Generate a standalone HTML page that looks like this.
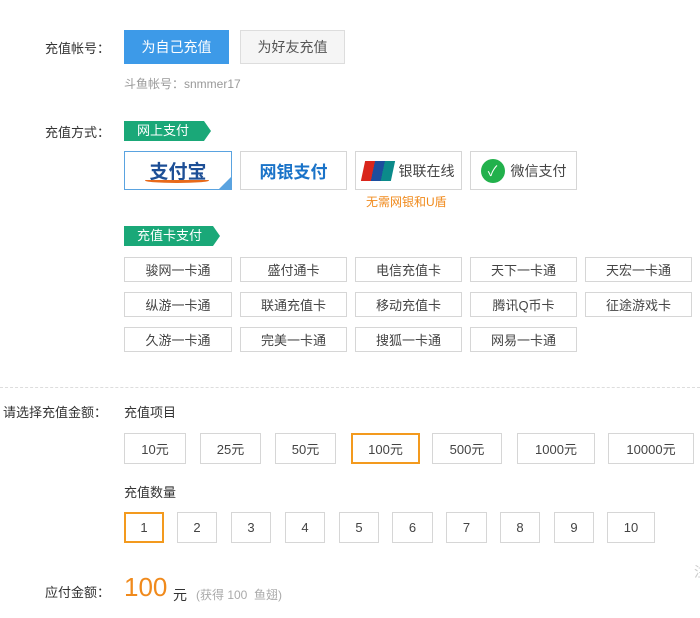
<!DOCTYPE html>
<html><head><meta charset="utf-8"><style>
*{margin:0;padding:0;box-sizing:border-box}
body{width:700px;height:618px;background:#fff;font-family:"Liberation Sans","Noto Sans CJK SC",sans-serif;font-size:13px;color:#333;position:relative;overflow:hidden}
.a{position:absolute;white-space:nowrap}
.b{position:absolute;border:1px solid #d6d6d6;background:#fff;display:flex;align-items:center;justify-content:center;font-size:13px;color:#444}
.o{border:2px solid #f39a1e}
.tag{position:absolute;height:20px;background:#1aa878;color:#fff;font-size:13px;line-height:20px;padding-left:13px;clip-path:polygon(0 0,calc(100% - 7px) 0,100% 50%,calc(100% - 7px) 100%,0 100%)}
</style></head><body>
<div class="a" style="left:45px;top:38px">充值帐号：</div>
<div class="b" style="left:124px;top:30px;width:105px;height:34px;background:#3d9ae8;border-color:#3d9ae8;color:#fff;font-size:14px">为自己充值</div>
<div class="b" style="left:240px;top:30px;width:105px;height:34px;background:#f5f5f5;border-color:#ddd;color:#555;font-size:14px">为好友充值</div>
<div class="a" style="left:124px;top:75px;font-size:12px;color:#999">斗鱼帐号：snmmer17</div>

<div class="a" style="left:45px;top:122px">充值方式：</div>
<div class="tag" style="left:124px;top:121px;width:87px">网上支付</div>
<div class="b" style="left:124px;top:151px;width:108px;height:39px;border-color:#5aa3e0"><span style="position:relative;font-weight:bold;font-size:19px;color:#1d4f96">支付宝<span style="position:absolute;left:-4px;right:-2px;bottom:1px;height:5px;border-radius:50%;border-bottom:3px solid #e86a1a"></span></span>
<div style="position:absolute;right:0;bottom:0;width:0;height:0;border-left:12px solid transparent;border-bottom:12px solid #5aa3e0"></div></div>
<div class="b" style="left:240px;top:151px;width:107px;height:39px;font-size:17px;font-weight:bold;color:#1a73c8">网银支付</div>
<div class="b" style="left:355px;top:151px;width:107px;height:39px;font-size:14px;color:#444"><span style="display:inline-block;width:30px;height:20px;background:linear-gradient(90deg,#d9261c 0 33%,#1c4e9e 33% 66%,#0b8a8a 66%);transform:skewX(-12deg);margin-right:6px"></span>银联在线</div>
<div class="b" style="left:470px;top:151px;width:107px;height:39px;font-size:14px;color:#444"><span style="display:inline-block;width:24px;height:24px;border-radius:50%;background:#22b14c;margin-right:6px;color:#fff;font-size:14px;line-height:24px;text-align:center">✓</span>微信支付</div>
<div class="a" style="left:366px;top:193px;font-size:12px;color:#f08a1c">无需网银和U盾</div>

<div class="tag" style="left:124px;top:226px;width:96px">充值卡支付</div>
<div class="b" style="left:124px;top:257px;width:108px;height:25px">骏网一卡通</div>
<div class="b" style="left:240px;top:257px;width:107px;height:25px">盛付通卡</div>
<div class="b" style="left:355px;top:257px;width:107px;height:25px">电信充值卡</div>
<div class="b" style="left:470px;top:257px;width:107px;height:25px">天下一卡通</div>
<div class="b" style="left:585px;top:257px;width:107px;height:25px">天宏一卡通</div>
<div class="b" style="left:124px;top:292px;width:108px;height:25px">纵游一卡通</div>
<div class="b" style="left:240px;top:292px;width:107px;height:25px">联通充值卡</div>
<div class="b" style="left:355px;top:292px;width:107px;height:25px">移动充值卡</div>
<div class="b" style="left:470px;top:292px;width:107px;height:25px">腾讯Q币卡</div>
<div class="b" style="left:585px;top:292px;width:107px;height:25px">征途游戏卡</div>
<div class="b" style="left:124px;top:327px;width:108px;height:25px">久游一卡通</div>
<div class="b" style="left:240px;top:327px;width:107px;height:25px">完美一卡通</div>
<div class="b" style="left:355px;top:327px;width:107px;height:25px">搜狐一卡通</div>
<div class="b" style="left:470px;top:327px;width:107px;height:25px">网易一卡通</div>

<div class="a" style="left:0;top:387px;width:700px;border-top:1px dashed #ddd"></div>
<div class="a" style="left:3px;top:402px">请选择充值金额：</div>
<div class="a" style="left:124px;top:402px">充值项目</div>
<div class="b" style="left:124px;top:433px;width:62px;height:31px">10元</div>
<div class="b" style="left:200px;top:433px;width:61px;height:31px">25元</div>
<div class="b" style="left:275px;top:433px;width:61px;height:31px">50元</div>
<div class="b o" style="left:351px;top:433px;width:69px;height:31px">100元</div>
<div class="b" style="left:432px;top:433px;width:70px;height:31px">500元</div>
<div class="b" style="left:517px;top:433px;width:78px;height:31px">1000元</div>
<div class="b" style="left:608px;top:433px;width:86px;height:31px">10000元</div>
<div class="a" style="left:124px;top:482px">充值数量</div>
<div class="b o" style="left:124px;top:512px;width:40px;height:31px">1</div>
<div class="b" style="left:177px;top:512px;width:40px;height:31px">2</div>
<div class="b" style="left:231px;top:512px;width:40px;height:31px">3</div>
<div class="b" style="left:285px;top:512px;width:40px;height:31px">4</div>
<div class="b" style="left:339px;top:512px;width:40px;height:31px">5</div>
<div class="b" style="left:392px;top:512px;width:41px;height:31px">6</div>
<div class="b" style="left:446px;top:512px;width:41px;height:31px">7</div>
<div class="b" style="left:500px;top:512px;width:40px;height:31px">8</div>
<div class="b" style="left:554px;top:512px;width:40px;height:31px">9</div>
<div class="b" style="left:607px;top:512px;width:48px;height:31px">10</div>

<div class="a" style="left:45px;top:582px">应付金额：</div>
<div class="a" style="left:124px;top:572px;font-size:26px;color:#f08a1c">100</div>
<div class="a" style="left:173px;top:585px;font-size:14px;color:#333">元</div>
<div class="a" style="left:196px;top:586px;font-size:12px;color:#aaa">(获得 100 &nbsp;鱼翅)</div>
<div class="a" style="left:694px;top:562px;font-size:14px;color:#ccc">注</div>
</body></html>
